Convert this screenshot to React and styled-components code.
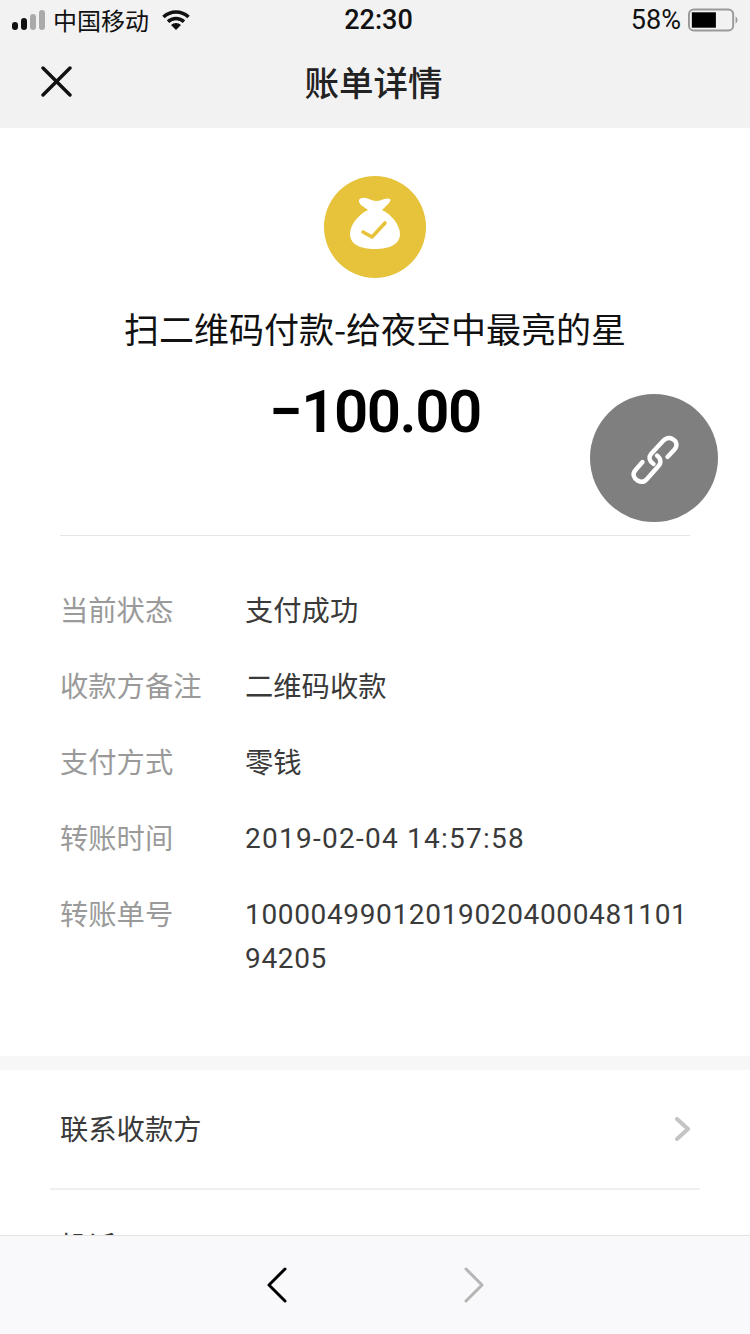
import React from 'react'
import styled, { createGlobalStyle } from 'styled-components'

const cjk = `"Noto Sans CJK SC", "Noto Sans", sans-serif`
const latin = `"Roboto", "Noto Sans CJK SC", sans-serif`
const gold = '#e6c33b'

const Global = createGlobalStyle`
  html, body { margin: 0; padding: 0; background: #fff; }
  * { box-sizing: border-box; }
`

const Page = styled.div`
  position: relative;
  width: 750px;
  height: 1334px;
  overflow: hidden;
  background: #fff;
  font-family: ${cjk};
`

const TopArea = styled.header`
  height: 128px;
  background: #f2f2f2;
  display: flex;
  flex-direction: column;
`

const StatusBar = styled.div`
  height: 40px;
  padding: 0 12px;
  display: flex;
  align-items: center;
  justify-content: space-between;
  color: #111;
`

const StatusSide = styled.div`
  width: 260px;
  display: flex;
  align-items: center;
  justify-content: ${p => (p.$end ? 'flex-end' : 'flex-start')};
  gap: ${p => p.$gap || 0}px;
`

const Carrier = styled.span`
  font-size: 24px;
  line-height: 40px;
  margin-left: 7px;
  margin-right: 13px;
`

const Clock = styled.span`
  font-family: ${latin};
  font-size: 27px;
  font-weight: 500;
  margin-left: 7px;
`

const Percent = styled.span`
  font-family: ${latin};
  font-size: 27px;
`

const NavBar = styled.div`
  flex: 1;
  padding: 0 0 6px 41px;
  display: flex;
  align-items: center;
`

const NavTitle = styled.div`
  flex: 1;
  margin-right: 72px;
  margin-left: -3px;
  text-align: center;
  font-size: 34.5px;
  font-weight: 500;
  color: #222;
`

const Summary = styled.section`
  margin: 0 60px;
  height: 408px;
  padding-top: 48px;
  display: flex;
  flex-direction: column;
  align-items: center;
  border-bottom: 1px solid #e5e5e5;
`

const Badge = styled.div`
  width: 102px;
  height: 102px;
  border-radius: 50%;
  background: ${gold};
  display: flex;
  align-items: center;
  justify-content: center;
`

const Merchant = styled.div`
  margin-top: 25px;
  font-size: 35px;
  line-height: 50px;
  color: #111;
  white-space: nowrap;
`

const Amount = styled.div`
  margin-top: 24px;
  font-family: ${latin};
  font-size: 60px;
  line-height: 70px;
  font-weight: 600;
  letter-spacing: -1.5px;
  color: #000;
`

const FloatButton = styled.div`
  position: absolute;
  left: 590px;
  top: 394px;
  width: 128px;
  height: 128px;
  border-radius: 50%;
  background: #7f7f7f;
  display: flex;
  align-items: center;
  justify-content: center;
`

const Details = styled.section`
  height: 520px;
  padding: 51px 60px 0;
  display: flex;
  flex-direction: column;
  gap: 32px;
`

const DetailRow = styled.div`
  display: grid;
  grid-template-columns: 185px 1fr;
  font-size: 28.3px;
  line-height: 44px;
`

const Label = styled.div`
  color: #9a9a9a;
`

const Value = styled.div`
  color: #3a3a3a;
`

const NumberValue = styled.div`
  font-family: ${latin};
  font-size: 28px;
  padding-top: 2px;
  margin-bottom: -2px;
  color: #3a3a3a;
  word-break: break-all;
  letter-spacing: ${p => p.$spacing}px;
`

const Gap = styled.div`
  height: 14px;
  background: #f7f7f7;
`

const MenuRow = styled.div`
  margin: 0 50px;
  height: ${p => p.$h}px;
  padding: 0 10px ${p => (p.$line ? 4 : 0)}px;
  display: flex;
  align-items: center;
  justify-content: space-between;
  font-size: 28.3px;
  color: #3a3a3a;
  border-bottom: ${p => (p.$line ? '2px solid #f0f0f0' : 'none')};
`

const RowArrow = styled.span`
  display: flex;
  margin-top: 4px;
`

const Footer = styled.footer`
  position: absolute;
  left: 0;
  right: 0;
  bottom: 0;
  height: 99px;
  background: #f9f9fb;
  border-top: 1px solid #e2e2e2;
  display: flex;
  align-items: center;
  justify-content: center;
  gap: 177px;
`

const Signal = () => (
  <svg width="34" height="20" viewBox="0 0 34 20">
    <rect x="0" y="12" width="6" height="8" rx="3" fill="#111" />
    <rect x="9" y="8" width="6" height="12" rx="3" fill="#111" />
    <rect x="18" y="4" width="6" height="16" rx="3" fill="#aaa" />
    <rect x="27" y="0" width="6" height="20" rx="3" fill="#aaa" />
  </svg>
)

const Wifi = () => (
  <svg width="28" height="20" viewBox="0 0 28 20" fill="none" stroke="#111" strokeWidth="3.6">
    <path d="M1.5 7 A18 18 0 0 1 26.5 7" />
    <path d="M6 11.6 A12 12 0 0 1 22 11.6" />
    <path d="M14 20 L9 15 A7 7 0 0 1 19 15 Z" fill="#111" stroke="none" />
  </svg>
)

const Battery = () => (
  <svg width="50" height="24" viewBox="0 0 52 24">
    <rect x="1" y="1" width="46" height="22" rx="5" fill="none" stroke="#999" strokeWidth="2" />
    <rect x="4" y="4" width="25" height="16" fill="#000" />
    <path d="M49.5 8 A5 5 0 0 1 49.5 16 Z" fill="#999" />
  </svg>
)

const Close = () => (
  <svg width="31" height="31" viewBox="0 0 31 31" stroke="#111" strokeWidth="3.4" strokeLinecap="round">
    <path d="M2 2 L29 29 M29 2 L2 29" />
  </svg>
)

const MoneyBag = () => (
  <svg width="70" height="70" viewBox="0 0 70 70">
    <g transform="translate(0 -2)">
      <path
        fill="#fff"
        d="M22 8 C27 7 31 11 36 11 C41 11 46 7 50 9 C52 11 47 15 42 20 C52 25 60 35 60 44 C60 54 50 59 35 59 C20 59 10 54 10 44 C10 35 18 25 28 20 C24 17 18 14 19 10 C19.5 9 20.5 8 22 8 Z"
      />
      <path d="M23 42 L32 47 L45 33" fill="none" stroke={gold} strokeWidth="3.6" strokeLinecap="round" strokeLinejoin="round" />
    </g>
  </svg>
)

const LinkIcon = () => (
  <svg width="60" height="60" viewBox="0 0 60 60" fill="none" stroke="#fff" strokeWidth="4.4" strokeLinecap="round">
    <g transform="translate(1 2)">
      <path d="M42.5 27 L49.5 19.5 C53 15.5 51.5 11 47.5 9 C44 7 41 8 38 11 L26 24 C23.5 27 24 31 28.5 34" />
      <path d="M17.5 32 L10.5 40 C7 44 8.5 48 12.5 50.5 C16 52.5 19.5 52 22 49 L33.5 36 C36.5 33 36 28.5 32 25.5" />
    </g>
  </svg>
)

const Chevron = ({ dir = 'right', color, w = 16, h = 22, sw = 3 }) => (
  <svg width={w + 4} height={h + 4} viewBox={`-2 -2 ${w + 4} ${h + 4}`} fill="none" stroke={color} strokeWidth={sw} strokeLinecap="round" strokeLinejoin="round">
    <path d={dir === 'right' ? `M0 0 L${w} ${h / 2} L0 ${h}` : `M${w} 0 L0 ${h / 2} L${w} ${h}`} />
  </svg>
)

const rows = [
  ['当前状态', '支付成功'],
  ['收款方备注', '二维码收款'],
  ['支付方式', '零钱'],
  ['转账时间', '2019-02-04 14:57:58', 1.25],
  ['转账单号', '100004990120190204000481101 94205', 0.65],
]

export default function App() {
  return (
    <Page>
      <Global />
      <TopArea>
        <StatusBar>
          <StatusSide>
            <Signal />
            <Carrier>中国移动</Carrier>
            <Wifi />
          </StatusSide>
          <Clock>22:30</Clock>
          <StatusSide $end $gap={7}>
            <Percent>58%</Percent>
            <Battery />
          </StatusSide>
        </StatusBar>
        <NavBar>
          <Close />
          <NavTitle>账单详情</NavTitle>
        </NavBar>
      </TopArea>

      <Summary>
        <Badge>
          <MoneyBag />
        </Badge>
        <Merchant>扫二维码付款-给夜空中最亮的星</Merchant>
        <Amount>−100.00</Amount>
      </Summary>

      <FloatButton>
        <LinkIcon />
      </FloatButton>

      <Details>
        {rows.map(([label, value, spacing]) => (
          <DetailRow key={label}>
            <Label>{label}</Label>
            {spacing ? <NumberValue $spacing={spacing}>{value}</NumberValue> : <Value>{value}</Value>}
          </DetailRow>
        ))}
      </Details>

      <Gap />
      <MenuRow $h={120} $line>
        联系收款方
        <RowArrow>
          <Chevron color="#c4c4c4" w={11} h={20} sw={4} />
        </RowArrow>
      </MenuRow>
      <MenuRow $h={108}>投诉</MenuRow>

      <Footer>
        <Chevron dir="left" color="#000" w={16} h={32} sw={3} />
        <Chevron color="#b5b5b5" w={16} h={32} sw={3} />
      </Footer>
    </Page>
  )
}
